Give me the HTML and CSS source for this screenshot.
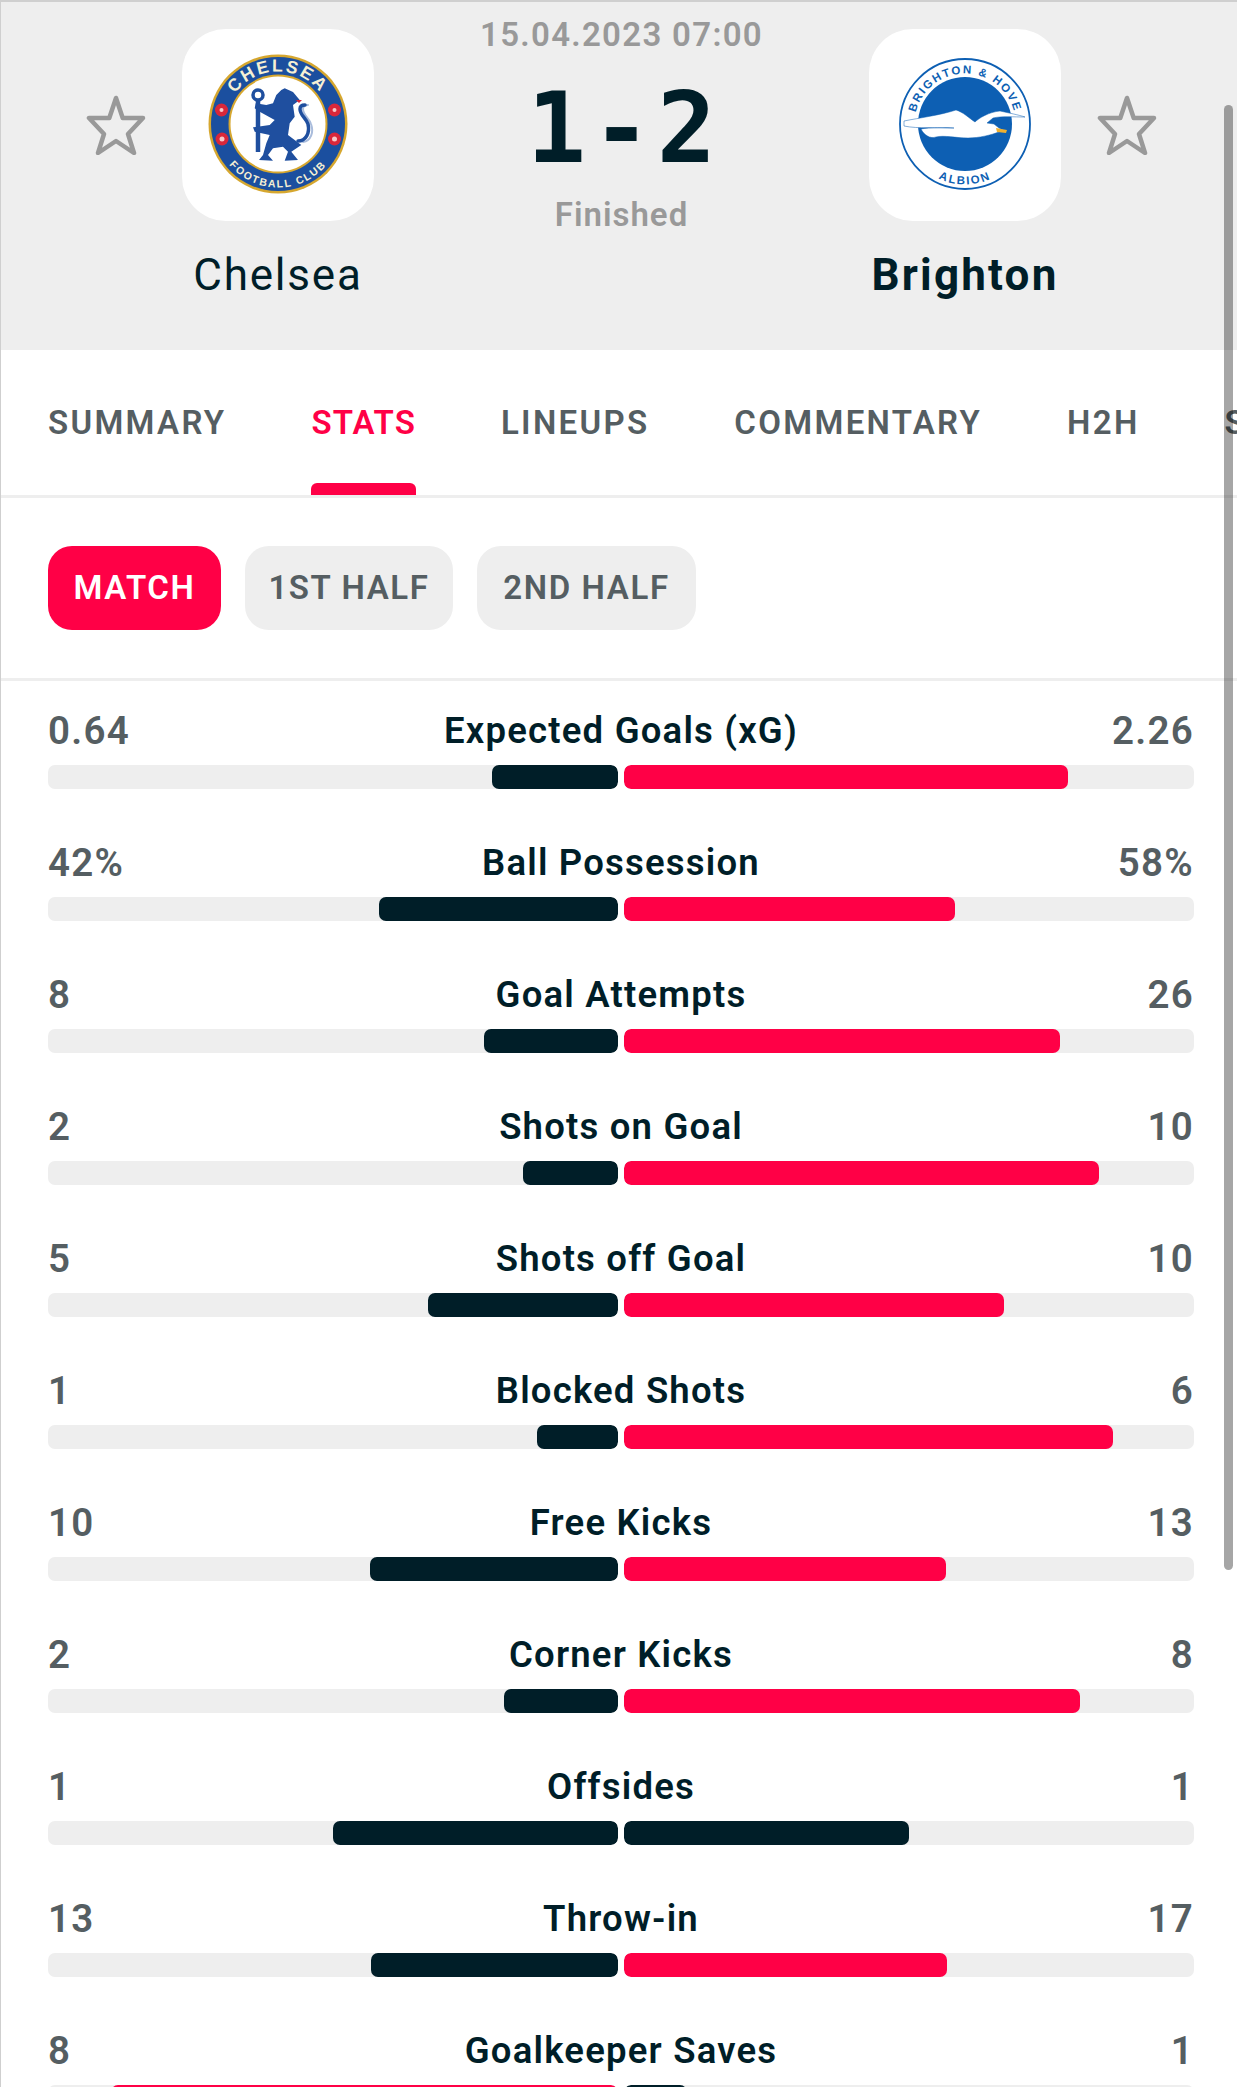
FILE: index.html
```html
<!DOCTYPE html>
<html lang="en">
<head>
<meta charset="utf-8">
<title>Chelsea - Brighton</title>
<link rel="stylesheet" href="styles.css">
</head>
<body>
<div class="frame">
  <header class="match">
    <svg class="star" viewBox="0 0 60 60"><path d="M30 3 36.7 23H57L42 39l6 19-18-12-18 12 6-19L3 23h20.300z"/></svg>
    <div class="team">
      <div class="logo">
        <svg class="crest chelsea" viewBox="0 0 140 140">
          <defs>
            <path id="ch-top" d="M70 70m-52.500 0a52.500 52.500 0 0 1 105 0"/>
            <path id="ch-bot" d="M70 70m-63.500 0a63.500 63.500 0 0 0 127 0"/>
          </defs>
          <circle cx="70" cy="70" r="69.500" fill="#d6a72f"/>
          <circle cx="70" cy="70" r="67" fill="#1b4f9f"/>
          <circle cx="70" cy="70" r="49.500" fill="#d6a72f"/>
          <circle cx="70" cy="70" r="47.500" fill="#fff"/>
          <text class="ch-name"><textPath href="#ch-top" startOffset="50%" text-anchor="middle">CHELSEA</textPath></text>
          <text class="ch-club"><textPath href="#ch-bot" startOffset="50%" text-anchor="middle">FOOTBALL CLUB</textPath></text>
          <g class="rose"><circle cx="13.500" cy="56" r="6.500"/><circle cx="126.500" cy="56" r="6.500"/><circle cx="14" cy="85" r="6.500"/><circle cx="126.500" cy="85" r="6.500"/></g>
          <g class="rose-in"><circle cx="13.500" cy="56" r="2"/><circle cx="126.500" cy="56" r="2"/><circle cx="14" cy="85" r="2.500"/><circle cx="126.500" cy="85" r="2.500"/></g>
          <circle class="staff" cx="50" cy="41" r="5"/>
          <path class="staff wide" d="M50 47V98"/>
          <path class="tail-shade" d="M95 88c8-1 11-10 8-18-2-6-8-9-8-15 0-3 2-4 5-4"/>
          <path class="tail" d="M90 87c8 0 12-8 10-17-2-6-8-9-8-15 0-3 2-4 5-4"/>
          <path class="lion" d="M76.700 34.300L85 38 91.700 46 85 51 86.700 62.700 81.700 69.300 80 81 93.300 91 83.300 97.700 90 106 76.700 106.700 80 97.700 75 92.700 65 94.300 60 101 65 106.700 51 106 55 101 58.300 89.300 61.700 81 46.700 77.700 45 73.300 61.700 71 66.700 66 51.700 57.700 46.700 54.300 47.700 49.300 58.300 51 65 49.300 68.300 41 73.300 36z"/>
          <path class="tongue" d="M88 46h6l-3 3z"/>
        </svg>
      </div>
      <div class="team-name">Chelsea</div>
    </div>
    <div class="result">
      <div class="date">15.04.2023 07:00</div>
      <div class="score">1-2</div>
      <div class="status">Finished</div>
    </div>
    <div class="team">
      <div class="logo">
        <svg class="crest brighton" viewBox="0 0 132 132">
          <defs>
            <path id="br-top" d="M66 66m-50.500 0a50.500 50.500 0 0 1 101 0"/>
            <path id="br-bot" d="M66 66m-60.500 0a60.500 60.500 0 0 0 121 0"/>
          </defs>
          <circle class="br-ring" cx="66" cy="66" r="65"/>
          <circle class="br-disc" cx="66" cy="66" r="47"/>
          <text class="br-text"><textPath href="#br-top" startOffset="50%" text-anchor="middle">BRIGHTON &amp; HOVE</textPath></text>
          <text class="br-text"><textPath href="#br-bot" startOffset="50%" text-anchor="middle">ALBION</textPath></text>
          <path class="gull" d="M5 63c15-3 37-6 52-11 7 2 13 8 19 12 4-4 14-10 25-11 9 2 19 4 25 6-11 0-24-1-32 1l-6 5 7 1 5 4 6 3-6 1c-8 3-20 6-31 6-12 0-24-3-32-1-6 2-12-2-15-8 9-2 24-1 33-1-17-1-36 1-50-2z"/>
          <path class="beak" d="M97 70l11 2-1 3-9-1z"/>
        </svg>
      </div>
      <div class="team-name bold">Brighton</div>
    </div>
    <svg class="star" viewBox="0 0 60 60"><path d="M30 3 36.700 23H57L42 39l6 19-18-12-18 12 6-19L3 23h20.300z"/></svg>
  </header>

  <nav class="tabs">
    <a class="tab">SUMMARY</a>
    <a class="tab active">STATS</a>
    <a class="tab">LINEUPS</a>
    <a class="tab">COMMENTARY</a>
    <a class="tab">H2H</a>
    <a class="tab">STANDINGS</a>
  </nav>

  <div class="periods">
    <a class="pill active">MATCH</a>
    <a class="pill">1ST HALF</a>
    <a class="pill">2ND HALF</a>
  </div>

  <section class="stats">
    <div class="stat">
      <div class="stat-head"><span class="val">0.64</span><span class="label">Expected Goals (xG)</span><span class="val right">2.26</span></div>
      <div class="bars"><div class="half home"><i class="fill dark" style="width:22.07%"></i></div><div class="half"><i class="fill red" style="width:77.93%"></i></div></div>
    </div>
    <div class="stat">
      <div class="stat-head"><span class="val">42%</span><span class="label">Ball Possession</span><span class="val right">58%</span></div>
      <div class="bars"><div class="half home"><i class="fill dark" style="width:42%"></i></div><div class="half"><i class="fill red" style="width:58%"></i></div></div>
    </div>
    <div class="stat">
      <div class="stat-head"><span class="val">8</span><span class="label">Goal Attempts</span><span class="val right">26</span></div>
      <div class="bars"><div class="half home"><i class="fill dark" style="width:23.53%"></i></div><div class="half"><i class="fill red" style="width:76.47%"></i></div></div>
    </div>
    <div class="stat">
      <div class="stat-head"><span class="val">2</span><span class="label">Shots on Goal</span><span class="val right">10</span></div>
      <div class="bars"><div class="half home"><i class="fill dark" style="width:16.67%"></i></div><div class="half"><i class="fill red" style="width:83.33%"></i></div></div>
    </div>
    <div class="stat">
      <div class="stat-head"><span class="val">5</span><span class="label">Shots off Goal</span><span class="val right">10</span></div>
      <div class="bars"><div class="half home"><i class="fill dark" style="width:33.33%"></i></div><div class="half"><i class="fill red" style="width:66.67%"></i></div></div>
    </div>
    <div class="stat">
      <div class="stat-head"><span class="val">1</span><span class="label">Blocked Shots</span><span class="val right">6</span></div>
      <div class="bars"><div class="half home"><i class="fill dark" style="width:14.29%"></i></div><div class="half"><i class="fill red" style="width:85.71%"></i></div></div>
    </div>
    <div class="stat">
      <div class="stat-head"><span class="val">10</span><span class="label">Free Kicks</span><span class="val right">13</span></div>
      <div class="bars"><div class="half home"><i class="fill dark" style="width:43.48%"></i></div><div class="half"><i class="fill red" style="width:56.52%"></i></div></div>
    </div>
    <div class="stat">
      <div class="stat-head"><span class="val">2</span><span class="label">Corner Kicks</span><span class="val right">8</span></div>
      <div class="bars"><div class="half home"><i class="fill dark" style="width:20%"></i></div><div class="half"><i class="fill red" style="width:80%"></i></div></div>
    </div>
    <div class="stat">
      <div class="stat-head"><span class="val">1</span><span class="label">Offsides</span><span class="val right">1</span></div>
      <div class="bars"><div class="half home"><i class="fill dark" style="width:50%"></i></div><div class="half"><i class="fill dark" style="width:50%"></i></div></div>
    </div>
    <div class="stat">
      <div class="stat-head"><span class="val">13</span><span class="label">Throw-in</span><span class="val right">17</span></div>
      <div class="bars"><div class="half home"><i class="fill dark" style="width:43.33%"></i></div><div class="half"><i class="fill red" style="width:56.67%"></i></div></div>
    </div>
    <div class="stat">
      <div class="stat-head"><span class="val">8</span><span class="label">Goalkeeper Saves</span><span class="val right">1</span></div>
      <div class="bars"><div class="half home"><i class="fill red" style="width:88.89%"></i></div><div class="half"><i class="fill dark" style="width:11.11%"></i></div></div>
    </div>
  </section>
  <div class="scrollbar"></div>
</div>
</body>
</html>
```
FILE: styles.css
```css
* { box-sizing: border-box; }
html, body { margin: 0; height: 100%; overflow: hidden; background: #fff; }
body { font-family: Roboto, "Liberation Sans", sans-serif; color: #001e28; }

.frame {
  position: relative;
  width: 1237px;
  height: 2087px;
  overflow: hidden;
  border-top: 2px solid #cfcfcf;
  border-left: 1px solid #cfcfcf;
}

/* Match header */
.match {
  display: flex;
  align-items: flex-start;
  height: 348px;
  padding: 27px 0 0 85px;
  background: #eeeeee;
}
.star { flex: none; width: 60px; height: 60px; margin-top: 66px; }
.star path { fill: none; stroke: #999; stroke-width: 4.500; stroke-linejoin: round; }
.team { flex: none; width: 192px; margin: 0 36px; display: flex; flex-direction: column; align-items: center; }
.logo {
  width: 192px;
  height: 192px;
  border-radius: 44px;
  background: #fff;
  display: flex;
  align-items: center;
  justify-content: center;
}
.crest { display: block; }
.chelsea { width: 140px; height: 140px; margin-top: -2px; }
.brighton { width: 132px; height: 132px; margin-top: -2px; }
.team-name {
  margin-top: 28px;
  font-size: 44px;
  line-height: 52px;
  letter-spacing: 1.8px;
  white-space: nowrap;
}
.team-name.bold { font-weight: 700; letter-spacing: 2.200px; }

.result { flex: none; width: 423px; margin-top: -27px; display: flex; flex-direction: column; align-items: center; }
.date { margin-top: 11px; font-size: 33px; line-height: 44px; letter-spacing: 1.300px; color: #999; font-weight: 600; white-space: nowrap; }
.score {
  margin-top: 28px;
  padding-left: 6px;
  font-family: "DejaVu Sans Mono", monospace;
  font-weight: 700;
  font-size: 98px;
  line-height: 86px;
  letter-spacing: 6px;
  color: #001e28;
}
.status { margin-top: 22px; font-size: 33px; line-height: 44px; letter-spacing: 1px; color: #999; font-weight: 600; }

/* Crest details */
.ch-name { font-family: "Liberation Sans", sans-serif; font-weight: 700; font-size: 17.500px; letter-spacing: 2.400px; fill: #f6f0d4; }
.ch-club { font-family: "Liberation Sans", sans-serif; font-weight: 700; font-size: 10.500px; letter-spacing: 1.700px; fill: #f6f0d4; }
.rose { fill: #d9273a; }
.rose-in { fill: #f7c8c8; }
.staff { fill: none; stroke: #1f4f9f; stroke-width: 3.500; }
.staff.wide { stroke-width: 4.500; }
.lion { fill: #1f4f9f; }
.tail { fill: none; stroke: #1f4f9f; stroke-width: 3.500; stroke-linecap: round; }
.tail-shade { fill: none; stroke: #a9bcdc; stroke-width: 2; stroke-linecap: round; }
.tongue { fill: #d9273a; }

.br-ring { fill: #fff; stroke: #0d5fb3; stroke-width: 1.800; }
.br-disc { fill: #0d5fb3; }
.br-text { font-family: "Liberation Sans", sans-serif; font-weight: 700; font-size: 11.500px; letter-spacing: 1.800px; fill: #0d5fb3; }
.gull { fill: #fff; stroke: #0d5fb3; stroke-width: .5; }
.beak { fill: #f0b030; }

/* Tabs */
.tabs {
  display: flex;
  gap: 85px;
  height: 148px;
  padding: 0 0 3px 47px;
  border-bottom: 3px solid #eeeeee;
  white-space: nowrap;
}
.tab {
  position: relative;
  flex: none;
  display: flex;
  align-items: center;
  height: 145px;
  font-size: 33px;
  font-weight: 600;
  letter-spacing: 2.300px;
  color: #555e62;
}
.tab.active { color: #ff0046; letter-spacing: 1.100px; }
.tab.active::after {
  content: "";
  position: absolute;
  left: 0;
  right: 0;
  bottom: 0;
  height: 12px;
  border-radius: 6px 6px 0 0;
  background: #ff0046;
}

/* Period pills */
.periods {
  display: flex;
  gap: 24px;
  height: 183px;
  padding: 48px 0 0 47px;
  border-bottom: 3px solid #eeeeee;
}
.pill {
  display: flex;
  align-items: center;
  height: 84px;
  padding: 0 0 2px;
  width: 173px;
  justify-content: center;
  border-radius: 24px;
  background: #eeeeee;
  font-size: 33px;
  font-weight: 600;
  letter-spacing: 1.600px;
  color: #555e62;
  white-space: nowrap;
}
.pill:nth-child(2) { width: 208px; }
.pill:nth-child(3) { width: 219px; }
.pill.active { background: #ff0046; color: #fff; }

/* Stat rows */
.stats { padding: 24px 43px 0 47px; }
.stat { margin-bottom: 48px; }
.stat-head {
  display: grid;
  grid-template-columns: 1fr auto 1fr;
  align-items: center;
  height: 48px;
  margin-bottom: 12px;
}
.val { padding-top: 2px; font-size: 38.500px; font-weight: 600; letter-spacing: 1.300px; color: #555e62; }
.val.right { text-align: right; }
.label { padding-top: 2px; font-size: 36.500px; font-weight: 600; letter-spacing: 1.200px; color: #001e28; white-space: nowrap; }
.bars { display: flex; gap: 6px; height: 24px; }
.half { flex: 1; display: flex; background: #eeeeee; border-radius: 7px; overflow: hidden; }
.half.home { justify-content: flex-end; }
.fill { display: block; height: 100%; border-radius: 7px; }
.dark { background: #001e28; }
.red { background: #ff0046; }

/* Overlay scrollbar */
.scrollbar {
  position: absolute;
  top: 103px;
  left: 1223px;
  width: 9px;
  height: 1465px;
  border-radius: 5px;
  background: rgba(0, 0, 0, .35);
}
```
